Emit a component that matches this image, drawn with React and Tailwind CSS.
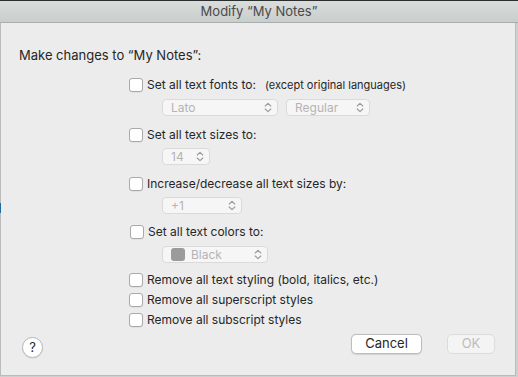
import React from "react";

const font = { fontFamily: "Inter, 'Liberation Sans', sans-serif" };

const Chevrons = () => (
  <svg width="8" height="11" viewBox="0 0 8 11" className="shrink-0">
    <path d="M1.2 4 L4 1.3 L6.8 4" fill="none" stroke="#9a9a9a" strokeWidth="1.1" strokeLinecap="round" strokeLinejoin="round" />
    <path d="M1.2 7 L4 9.7 L6.8 7" fill="none" stroke="#9a9a9a" strokeWidth="1.1" strokeLinecap="round" strokeLinejoin="round" />
  </svg>
);

const Popup = ({ label, width, swatch }) => (
  <div
    className={`h-[17px] ${width} flex items-center justify-between rounded-[4px] border border-[#dadada] bg-[#f6f6f6] pl-[8px] pr-[5px] text-[12px] text-[#b4b4b4]`}
  >
    <div className="flex items-center gap-[6px]">
      {swatch && <span className="w-[14px] h-[13px] rounded-[3px] bg-[#9b9b9b]" />}
      <span>{label}</span>
    </div>
    <Chevrons />
  </div>
);

const Check = ({ label, extra, className = "" }) => (
  <div className={`h-[20px] flex items-center ${className}`}>
    <span className="w-[14px] h-[14px] rounded-[3px] border border-[#a9a9a9] bg-white shadow-[0_0.5px_0.5px_rgba(0,0,0,0.08)] shrink-0" />
    <span className="ml-[4px] text-[12px] text-[#262626]">{label}</span>
    {extra && <span className="ml-[9px] text-[11px] text-[#262626]">{extra}</span>}
  </div>
);

export default function App() {
  return (
    <div className="w-[518px] h-[377px] bg-[#cdd0cf] flex flex-col overflow-hidden" style={font}>
      <div className="h-[1px] bg-[#2a2d2d]" />
      <div className="h-[22px] bg-gradient-to-b from-[#d9dddc] to-[#c9cdcc] border-b border-[#a9adac] flex items-center justify-center text-[13px] text-[#4a4a4a]">
        Modify “My Notes”
      </div>
      <div className="relative w-[516px] h-[353px] bg-[#ececec] border-l border-r border-b border-[#b9bcbb] pt-[23px] pl-[18px]">
        <span className="absolute left-[-1px] top-[180px] w-[1px] h-[10px] bg-[#1d6aa0]" />
        <div className="h-[20px] flex items-center text-[13px] text-[#262626]">Make changes to “My Notes”:</div>

        <div className="ml-[110px]">
          <Check label="Set all text fonts to:" extra="(except original languages)" className="mt-[9px]" />
          <div className="ml-[33px] mt-[4px] flex gap-[8px]">
            <Popup label="Lato" width="w-[116px]" />
            <Popup label="Regular" width="w-[84px]" />
          </div>

          <Check label="Set all text sizes to:" className="mt-[9px]" />
          <div className="ml-[33px] mt-[3px]">
            <Popup label="14" width="w-[48px]" />
          </div>

          <Check label="Increase/decrease all text sizes by:" className="mt-[9px]" />
          <div className="ml-[33px] mt-[3px]">
            <Popup label="+1" width="w-[80px]" />
          </div>

          <Check label="Set all text colors to:" className="mt-[8px] ml-[1px]" />
          <div className="ml-[33px] mt-[4px]">
            <Popup label="Black" width="w-[106px]" swatch />
          </div>

          <Check label="Remove all text styling (bold, italics, etc.)" className="mt-[7px]" />
          <Check label="Remove all superscript styles" />
          <Check label="Remove all subscript styles" />
        </div>

        <div className="mt-[4px] flex items-start pr-[20px]">
          <div className="mt-[3px] ml-[3px] w-[21px] h-[21px] rounded-full bg-white border border-[#b8b8b8] shadow-[0_0.5px_1px_rgba(0,0,0,0.1)] flex items-center justify-center text-[13px] text-[#262626]">
            ?
          </div>
          <div className="ml-auto flex gap-[25px]">
            <div className="w-[71px] h-[20px] rounded-[5px] bg-white border border-[#bdbdbd] shadow-[0_0.5px_1px_rgba(0,0,0,0.12)] flex items-center justify-center text-[13px] text-[#262626]">
              Cancel
            </div>
            <div className="w-[48px] h-[20px] rounded-[5px] bg-[#f4f4f4] border border-[#dcdcdc] flex items-center justify-center text-[13px] text-[#bdbdbd]">
              OK
            </div>
          </div>
        </div>
      </div>
    </div>
  );
}
